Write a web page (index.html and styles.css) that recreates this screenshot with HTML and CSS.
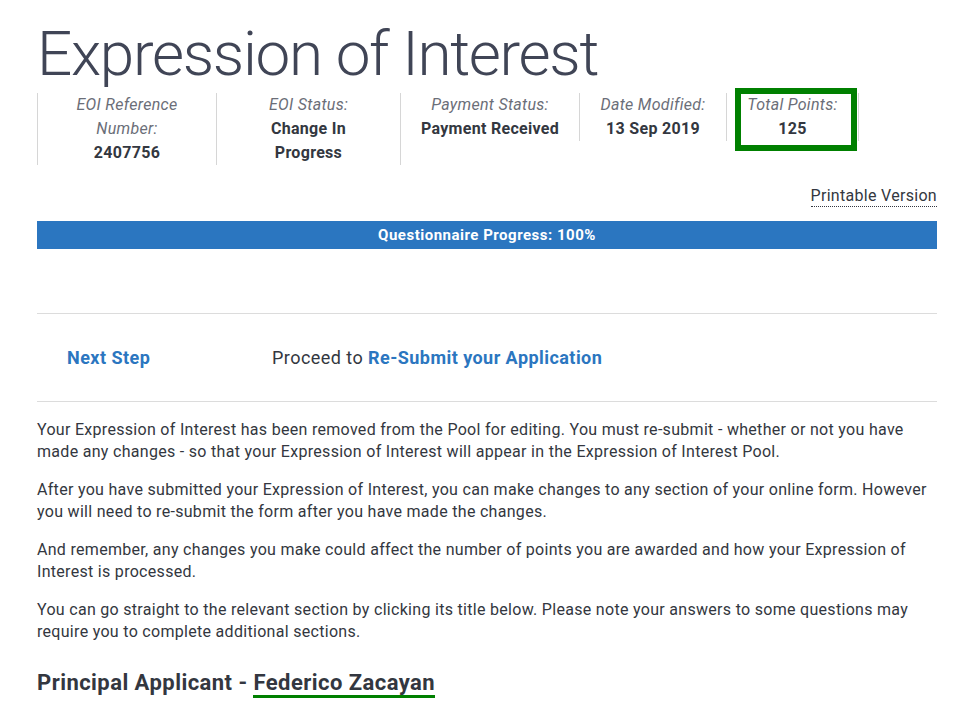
FILE: index.html
```html
<!DOCTYPE html>
<html lang="en">
<head>
<meta charset="utf-8">
<title>Expression of Interest</title>
<link rel="stylesheet" href="styles.css">
</head>
<body>
<main class="page">
  <h1 class="title">Expression of Interest</h1>
  <div class="summary">
    <div class="cell cell-first w1">
      <div class="label">EOI Reference Number:</div>
      <div class="value">2407756</div>
    </div>
    <div class="cell w2">
      <div class="label">EOI Status:</div>
      <div class="value">Change In Progress</div>
    </div>
    <div class="cell w3">
      <div class="label">Payment Status:</div>
      <div class="value">Payment Received</div>
    </div>
    <div class="cell w4">
      <div class="label">Date Modified:</div>
      <div class="value">13 Sep 2019</div>
    </div>
    <div class="cell w5 highlighted">
      <div class="label">Total Points:</div>
      <div class="value">125</div>
      <span class="highlight-box"></span>
    </div>
  </div>
  <div class="print-row"><a class="print-link" href="#">Printable Version</a></div>
  <div class="progress"><div class="progress-fill">Questionnaire Progress: 100%</div></div>
  <div class="next-step">
    <div class="next-label">Next Step</div>
    <div class="next-text">Proceed to <a href="#" class="next-link">Re-Submit your Application</a></div>
  </div>
  <div class="content">
    <p>Your Expression of Interest has been removed from the Pool for editing. You must re-submit - whether or not you have made any changes - so that your Expression of Interest will appear in the Expression of Interest Pool.</p>
    <p>After you have submitted your Expression of Interest, you can make changes to any section of your online form. However you will need to re-submit the form after you have made the changes.</p>
    <p>And remember, any changes you make could affect the number of points you are awarded and how your Expression of Interest is processed.</p>
    <p>You can go straight to the relevant section by clicking its title below. Please note your answers to some questions may require you to complete additional sections.</p>
    <h2 class="applicant">Principal Applicant - <span class="applicant-name">Federico Zacayan</span></h2>
  </div>
</main>
</body>
</html>
```
FILE: styles.css
```css
html, body {
  margin: 0;
  padding: 0;
  background: #ffffff;
}
body {
  font-family: Roboto, "Liberation Sans", sans-serif;
  color: #333740;
  font-size: 16px;
  letter-spacing: 0.3px;
}
.page {
  width: 900px;
  margin-left: 37px;
  padding-top: 18px;
}
.title {
  margin: 0;
  font-weight: 300;
  font-size: 62px;
  line-height: 72px;
  color: #404556;
  letter-spacing: -1.3px;
}
.summary {
  display: flex;
  align-items: flex-start;
  margin-top: 3px;
}
.cell {
  position: relative;
  border-right: 1px solid #d6d6d6;
  text-align: center;
  line-height: 24px;
  box-sizing: border-box;
  padding: 0 20px;
}
.cell-first { border-left: 1px solid #d6d6d6; }
.w1 { width: 180px; padding: 0 36px; }
.w2 { width: 184px; padding: 0 40px; }
.w3 { width: 179px; padding: 0 4px; }
.w4 { width: 147px; padding: 0 4px; }
.w5 { width: 132px; padding: 0 4px; }
.label {
  font-style: italic;
  color: #6b6e78;
}
.value {
  font-weight: 700;
  color: #333740;
}
.highlight-box {
  position: absolute;
  left: 8px;
  top: -5px;
  width: 122px;
  height: 63px;
  border: 6px solid #008000;
  box-sizing: border-box;
}
.print-row {
  display: flex;
  justify-content: flex-end;
  margin-top: 21px;
}
.print-link {
  color: #333740;
  text-decoration: none;
  border-bottom: 1px dotted #333740;
  line-height: 20px;
}
.progress {
  margin-top: 14px;
  background: #e6e6e6;
  height: 28px;
}
.progress-fill {
  width: 100%;
  height: 28px;
  background: #2b76c0;
  color: #ffffff;
  font-weight: 700;
  font-size: 15px;
  line-height: 28px;
  text-align: center;
  letter-spacing: 0.5px;
}
.next-step {
  display: flex;
  align-items: center;
  margin-top: 64px;
  border-top: 1px solid #dcdcdc;
  border-bottom: 1px solid #dcdcdc;
  height: 87px;
  font-size: 18px;
  letter-spacing: 0.45px;
}
.next-label {
  width: 205px;
  padding-left: 30px;
  font-weight: 700;
  color: #2b76c0;
}
.next-text {
  color: #333740;
}
.next-link {
  color: #2b76c0;
  font-weight: 700;
  text-decoration: none;
}
.content {
  padding-top: 17px;
}
.content p {
  margin: 0 0 16px 0;
  line-height: 22px;
}
.applicant {
  margin: 25px 0 0 0;
  font-size: 22px;
  font-weight: 700;
  line-height: 30px;
  color: #333740;
  letter-spacing: 0.45px;
}
.applicant-name {
  border-bottom: 4px solid #008000;
}
```
